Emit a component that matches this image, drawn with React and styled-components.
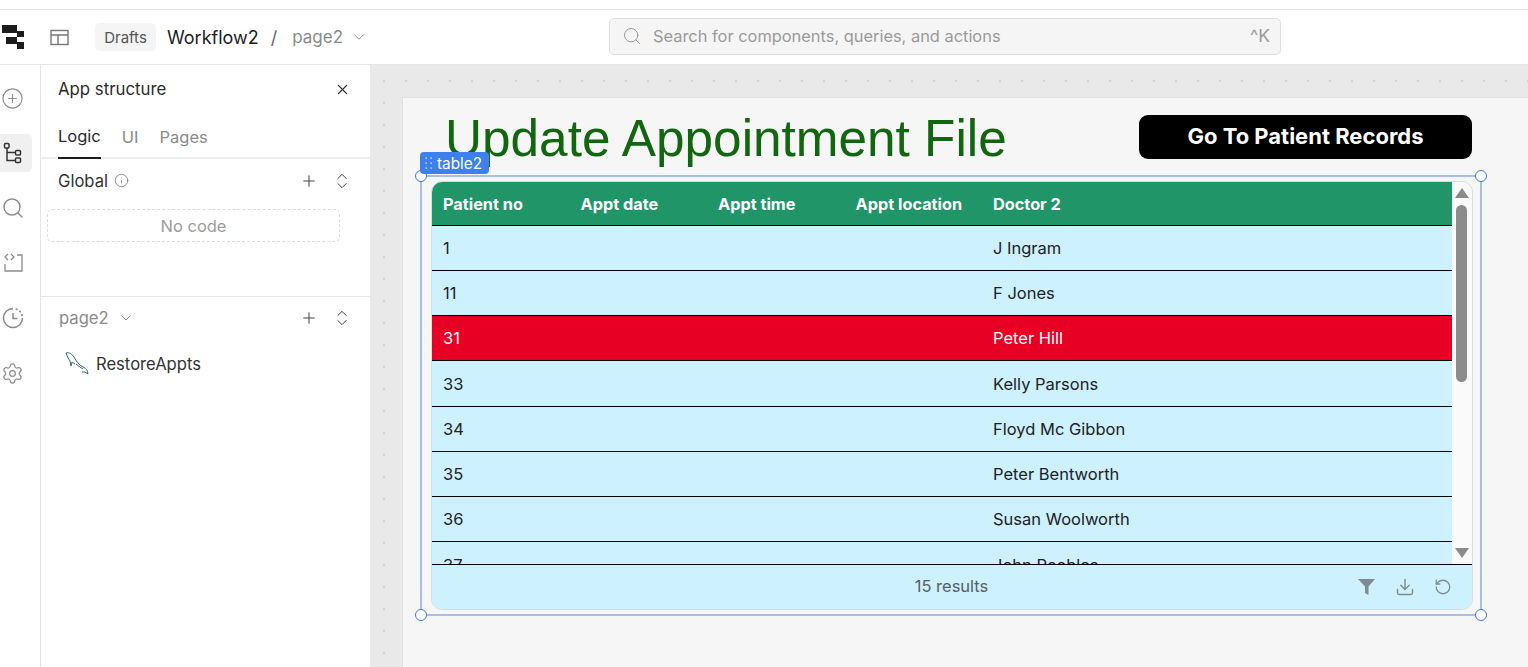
import React from "react";
import styled, { createGlobalStyle } from "styled-components";
import { Plus, X, ChevronDown, ChevronsUpDown, Info, Search, Settings, CirclePlus, Download, RotateCcw } from "lucide-react";

const GlobalStyle = createGlobalStyle`
  html, body {
    margin: 0;
    padding: 0;
    height: 100%;
    overflow: hidden;
    background: #fff;
    font-family: Inter, "Liberation Sans", sans-serif;
  }
  * { box-sizing: border-box; }
`;

const Page = styled.div`
  width: 1528px;
  height: 667px;
  display: flex;
  flex-direction: column;
  overflow: hidden;
  padding-top: 9px;
`;

const Header = styled.header`
  height: 56px;
  flex: none;
  display: flex;
  align-items: center;
  background: #fff;
  border-top: 1px solid #e4e4e4;
  border-bottom: 1px solid #e6e6e6;
  position: relative;
`;

const LogoBox = styled.div`
  width: 50px;
  padding-left: 1px;
  display: flex;
  align-items: center;
`;

const LayoutBtn = styled.div`
  width: 45px;
  display: flex;
  align-items: center;
  color: #777;
`;

const DraftsChip = styled.span`
  height: 28px;
  width: 61px;
  display: flex;
  align-items: center;
  justify-content: center;
  border-radius: 5px;
  background: #f5f5f5;
  color: #555;
  font-size: 15px;
`;

const AppName = styled.span`
  margin-left: 11px;
  color: #1c1c1c;
  font-size: 18px;
`;

const Slash = styled.span`
  margin-left: 12px;
  color: #666;
  font-size: 18px;
`;

const PageName = styled.span`
  margin-left: 15px;
  margin-right: 7px;
  color: #8a8a8a;
  font-size: 17px;
`;

const SearchBar = styled.div`
  position: absolute;
  left: 609px;
  top: 8px;
  width: 672px;
  height: 37px;
  display: flex;
  align-items: center;
  padding: 0 10px 2px 12px;
  background: #f5f5f5;
  border: 1px solid #dfdfdf;
  border-radius: 5px;
  color: #9a9a9a;
  font-size: 16.4px;
`;

const SearchText = styled.span`
  flex: 1;
  margin-left: 11px;
`;

const Shortcut = styled.span`
  font-size: 17.5px;
`;

const Body = styled.div`
  flex: 1;
  display: flex;
  min-height: 0;
`;

const Rail = styled.nav`
  width: 41px;
  flex: none;
  display: flex;
  flex-direction: column;
  align-items: flex-start;
  padding-top: 14px;
  gap: 17px;
  border-right: 1px solid #e6e6e6;
  color: #8c8c8c;
`;

const RailItem = styled.div`
  width: 32px;
  height: 38px;
  display: flex;
  align-items: center;
  justify-content: center;
  padding-right: 7px;
  border-radius: 0 5px 5px 0;
  background: ${(p) => (p.$active ? "#f0f0f0" : "transparent")};
  color: ${(p) => (p.$active ? "#333" : "#8c8c8c")};
`;

const Panel = styled.aside`
  width: 329px;
  flex: none;
  background: #fff;
  display: flex;
  flex-direction: column;
`;

const PanelTitle = styled.div`
  height: 48px;
  padding: 0 19px 0 17px;
  display: flex;
  align-items: center;
  justify-content: space-between;
  color: #2a2a2a;
  font-size: 16.8px;
`;

const Tabs = styled.div`
  height: 46px;
  display: flex;
  padding-left: 17px;
  gap: 21px;
  border-bottom: 2px solid #eeeeee;
`;

const Tab = styled.div`
  height: 46px;
  display: flex;
  align-items: center;
  padding-top: 2px;
  font-size: 16.5px;
  color: ${(p) => (p.$active ? "#2a2a2a" : "#8a8a8a")};
  border-bottom: ${(p) => (p.$active ? "2px solid #1c1c1c" : "none")};
`;

const SectionRow = styled.div`
  height: ${(p) => p.$h}px;
  display: flex;
  align-items: center;
  padding: 0 18px 0 ${(p) => p.$pl}px;
  color: ${(p) => p.$color};
  font-size: 16.6px;
`;

const SectionLabel = styled.span`
  flex: 1;
  display: flex;
  align-items: center;
  gap: ${(p) => p.$gap}px;
`;

const SectionActions = styled.span`
  display: flex;
  align-items: center;
  gap: 14px;
  color: #444;
`;

const NoCode = styled.div`
  margin: 7px 30px 0 6px;
  height: 33px;
  display: flex;
  align-items: center;
  justify-content: center;
  border: 1px dashed #dcdcdc;
  border-radius: 5px;
  color: #9c9c9c;
  font-size: 16.5px;
`;

const Divider = styled.div`
  height: 1px;
  margin-top: 54px;
  background: #e6e6e6;
`;

const QueryRow = styled.div`
  display: flex;
  align-items: center;
  gap: 6px;
  margin-top: 7px;
  padding-left: 24px;
  height: 36px;
  color: #333;
  font-size: 16.6px;
`;

const Canvas = styled.main`
  flex: 1;
  position: relative;
  padding: 32px 0 0 32px;
  background-color: #e9e9e9;
  background-image: radial-gradient(#d4d4d4 1px, transparent 1.2px);
  background-size: 22px 22px;
  background-position: 3px 5px;
`;

const Sheet = styled.div`
  width: 1126px;
  height: 570px;
  background: #f6f6f6;
  border-left: 1px solid #e2e2e2;
  border-top: 1px solid #e2e2e2;
  padding: 16px 0 0 28px;
`;

const TitleRow = styled.div`
  display: flex;
  align-items: flex-start;
  height: 67px;
`;

const Heading = styled.h1`
  margin: 0 0 0 14px;
  width: 694px;
  font-family: "Liberation Sans", Arial, sans-serif;
  font-weight: 400;
  font-size: 51.3px;
  line-height: 50px;
  color: #12660f;
  white-space: nowrap;
`;

const GoButton = styled.button`
  width: 333px;
  height: 44px;
  margin-top: 1px;
  padding: 0 0 2px;
  border: none;
  border-radius: 9px;
  background: #000;
  color: #fff;
  font-family: Inter, sans-serif;
  font-weight: 700;
  font-size: 22px;
`;

const TableCard = styled.div`
  width: 1042px;
  height: 429px;
  display: flex;
  flex-direction: column;
  overflow: hidden;
  background: #fafafa;
  border: 1px solid #cfdfe8;
  border-radius: 11px;
`;

const TableArea = styled.div`
  height: 383px;
  flex: none;
  display: flex;
  overflow: hidden;
  border-bottom: 1px solid #000;
`;

const TableMain = styled.div`
  flex: 1;
  overflow: hidden;
`;

const Row = styled.div`
  height: ${(p) => (p.$head ? 43.7 : 45.25)}px;
  padding-top: ${(p) => (p.$head ? 2 : 0)}px;
  display: grid;
  grid-template-columns: repeat(4, 137.5px) 1fr;
  align-items: center;
  background: ${(p) => (p.$head ? "#1f9568" : p.$danger ? "#e80024" : "#cdf1fe")};
  color: ${(p) => (p.$head || p.$danger ? "#fff" : "#222")};
  font-size: ${(p) => (p.$head ? 16.3 : 16.5)}px;
  font-weight: ${(p) => (p.$head ? 700 : 400)};
  border-bottom: 1px solid #000;
`;

const Cell = styled.div`
  padding-left: 11px;
  white-space: nowrap;
`;

const Scrollbar = styled.div`
  width: 20px;
  flex: none;
  position: relative;
  background: #fafafa;
`;

const ScrollThumb = styled.div`
  position: absolute;
  left: 4px;
  top: 23px;
  width: 11px;
  height: 177px;
  border-radius: 6px;
  background: #8c8c8c;
`;

const Arrow = styled.div`
  position: absolute;
  left: 3px;
  ${(p) => (p.$down ? "bottom: 6px;" : "top: 6px;")}
  width: 0;
  height: 0;
  border-left: 7px solid transparent;
  border-right: 7px solid transparent;
  ${(p) => (p.$down ? "border-top: 10px solid #8a8a8a;" : "border-bottom: 10px solid #8a8a8a;")}
`;

const Footer = styled.div`
  flex: 1;
  position: relative;
  display: flex;
  align-items: center;
  justify-content: center;
  padding: 0 1px 2px 0;
  background: #cdf1fe;
  color: #556066;
  font-size: 16.5px;
`;

const FooterIcons = styled.div`
  position: absolute;
  right: 20px;
  top: 12px;
  display: flex;
  align-items: center;
  gap: 19px;
  color: #7d8c93;
`;

const SelectionBox = styled.div`
  position: absolute;
  left: 50px;
  top: 110px;
  width: 1062px;
  height: 441px;
  border: 2px solid #a8bfe4;
  pointer-events: none;
`;

const Handle = styled.span`
  position: absolute;
  width: 12px;
  height: 12px;
  border-radius: 50%;
  background: #fff;
  border: 1px solid #3f78e0;
  ${(p) => (p.$right ? "right: -7px;" : "left: -7px;")}
  ${(p) => (p.$bottom ? "bottom: -7px;" : "top: -7px;")}
`;

const SelectionTag = styled.div`
  position: absolute;
  left: 50px;
  top: 87px;
  width: 69px;
  height: 22px;
  display: flex;
  align-items: center;
  gap: 4px;
  padding-left: 5px;
  border-radius: 4px;
  background: #3e80ed;
  color: #fff;
  font-size: 15.3px;
`;

const rows = [
  ["1", "J Ingram"],
  ["11", "F Jones"],
  ["31", "Peter Hill", true],
  ["33", "Kelly Parsons"],
  ["34", "Floyd Mc Gibbon"],
  ["35", "Peter Bentworth"],
  ["36", "Susan Woolworth"],
  ["37", "John Peebles"],
];

const Logo = () => (
  <svg width="24" height="24" viewBox="0 0 24 24" fill="#1c1c1c">
    <path d="M1 0h15v6h7v6h-7V8H1z" />
    <path d="M5 12h11v5h7v7h-7v-5H5z" />
  </svg>
);

const LayoutIcon = () => (
  <svg width="20" height="17" viewBox="0 0 20 17" fill="none" stroke="currentColor" strokeWidth="1.4">
    <rect x="1" y="1.5" width="17" height="14" />
    <path d="M1 6h17M8 6v9.5" />
  </svg>
);

const TreeIcon = () => (
  <svg width="20" height="22" viewBox="0 0 20 22" fill="none" stroke="currentColor" strokeWidth="1.5">
    <rect x="1.5" y="1.5" width="4.5" height="4.5" rx="1" />
    <rect x="12.5" y="8.5" width="5" height="4.5" rx="1" />
    <rect x="12.5" y="16" width="5" height="4.5" rx="1" />
    <path d="M4 6v12.5h8.5M4 10.5h8.5" />
  </svg>
);

const CodeIcon = () => (
  <svg width="20" height="20" viewBox="0 0 20 20" fill="none" stroke="currentColor" strokeWidth="1.3">
    <path d="M5 1 2 4l3 3M8 1l3 3-3 3" />
    <path d="M14 2h5v16H2v-7" />
  </svg>
);

const HistoryIcon = () => (
  <svg width="22" height="22" viewBox="0 0 22 22" fill="none" stroke="currentColor" strokeWidth="1.5">
    <path d="M11 1.5A9.5 9.5 0 1 0 20.5 11" />
    <path d="M11 6v5.5h4.5" />
    <path d="M14.5 2.2l.1.1M18 4.5l.1.1M20 8l.1.1" strokeLinecap="round" strokeWidth="2" />
  </svg>
);

const Dolphin = () => (
  <svg width="25" height="24" viewBox="0 0 25 24" fill="none" stroke="#1d5a6e" strokeWidth="0.9">
    <path d="M1 1c3-1 6 1 8 4 2 4 5 8 9 10 2 1 3 2 4 3l1 4-3-2-3 0" />
    <path d="M1 1l2 5 2 3 1 5 1-4 3 2" />
    <path d="M11 12l4 3 3 2" />
  </svg>
);

const Filter = () => (
  <svg width="18" height="18" viewBox="0 0 18 18" fill="currentColor">
    <path d="M0 1h17l-6.5 7.5V17L7 15V8.5z" />
  </svg>
);

const DragDots = () => (
  <svg width="8" height="12" viewBox="0 0 8 12" fill="#cfe0fb">
    {[1, 6, 11].map((y) => (
      <g key={y}>
        <rect x="0.5" y={y - 0.6} width="1.4" height="1.4" />
        <rect x="5.5" y={y - 0.6} width="1.4" height="1.4" />
      </g>
    ))}
  </svg>
);

const App = () => {
  return (
    <>
      <GlobalStyle />
      <Page>
        <Header>
          <LogoBox>
            <Logo />
          </LogoBox>
          <LayoutBtn>
            <LayoutIcon />
          </LayoutBtn>
          <DraftsChip>Drafts</DraftsChip>
          <AppName>Workflow2</AppName>
          <Slash>/</Slash>
          <PageName>page2</PageName>
          <ChevronDown size={18} color="#8a8a8a" strokeWidth={1.3} />
          <SearchBar>
            <Search size={20} strokeWidth={1.2} />
            <SearchText>Search for components, queries, and actions</SearchText>
            <Shortcut>^K</Shortcut>
          </SearchBar>
        </Header>
        <Body>
          <Rail>
            <RailItem>
              <CirclePlus size={23} strokeWidth={1.2} />
            </RailItem>
            <RailItem $active>
              <TreeIcon />
            </RailItem>
            <RailItem>
              <Search size={24} strokeWidth={1.4} />
            </RailItem>
            <RailItem>
              <CodeIcon />
            </RailItem>
            <RailItem>
              <HistoryIcon />
            </RailItem>
            <RailItem>
              <Settings size={23} strokeWidth={1.3} />
            </RailItem>
          </Rail>
          <Panel>
            <PanelTitle>
              App structure
              <X size={17} strokeWidth={1.5} color="#333" />
            </PanelTitle>
            <Tabs>
              <Tab $active>Logic</Tab>
              <Tab>UI</Tab>
              <Tab>Pages</Tab>
            </Tabs>
            <SectionRow $h={43} $pl={17} $color="#333">
              <SectionLabel $gap={6}>
                Global <Info size={15} strokeWidth={1.3} color="#777" />
              </SectionLabel>
              <SectionActions>
                <Plus size={18} strokeWidth={1.4} />
                <ChevronsUpDown size={20} strokeWidth={1.2} />
              </SectionActions>
            </SectionRow>
            <NoCode>No code</NoCode>
            <Divider />
            <SectionRow $h={42} $pl={18} $color="#8a8a8a">
              <SectionLabel $gap={9}>
                page2 <ChevronDown size={16} strokeWidth={1.4} />
              </SectionLabel>
              <SectionActions>
                <Plus size={18} strokeWidth={1.4} />
                <ChevronsUpDown size={20} strokeWidth={1.2} />
              </SectionActions>
            </SectionRow>
            <QueryRow>
              <Dolphin />
              RestoreAppts
            </QueryRow>
          </Panel>
          <Canvas>
            <Sheet>
              <TitleRow>
                <Heading>Update Appointment File</Heading>
                <GoButton>Go To Patient Records</GoButton>
              </TitleRow>
              <TableCard>
                <TableArea>
                  <TableMain>
                    <Row $head>
                      <Cell>Patient no</Cell>
                      <Cell>Appt date</Cell>
                      <Cell>Appt time</Cell>
                      <Cell>Appt location</Cell>
                      <Cell>Doctor 2</Cell>
                    </Row>
                    {rows.map(([id, doctor, danger]) => (
                      <Row key={id} $danger={danger}>
                        <Cell>{id}</Cell>
                        <Cell />
                        <Cell />
                        <Cell />
                        <Cell>{doctor}</Cell>
                      </Row>
                    ))}
                  </TableMain>
                  <Scrollbar>
                    <Arrow />
                    <ScrollThumb />
                    <Arrow $down />
                  </Scrollbar>
                </TableArea>
                <Footer>
                  15 results
                  <FooterIcons>
                    <Filter />
                    <Download size={20} strokeWidth={1.7} />
                    <RotateCcw size={18} strokeWidth={1.7} />
                  </FooterIcons>
                </Footer>
              </TableCard>
            </Sheet>
            <SelectionBox>
              <Handle />
              <Handle $right />
              <Handle $bottom />
              <Handle $right $bottom />
            </SelectionBox>
            <SelectionTag>
              <DragDots />
              table2
            </SelectionTag>
          </Canvas>
        </Body>
      </Page>
    </>
  );
};

export default App;
